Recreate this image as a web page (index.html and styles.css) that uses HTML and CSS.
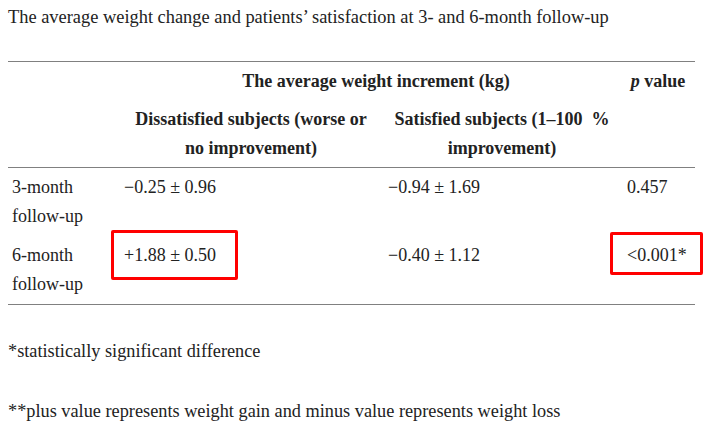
FILE: index.html
```html
<!DOCTYPE html>
<html>
<head>
<meta charset="utf-8">
<link rel="stylesheet" href="styles.css">
</head>
<body>
<div class="caption">The average weight change and patients’ satisfaction at 3- and 6-month follow-up</div>
<table class="tbl">
  <colgroup>
    <col class="c1"><col class="c2"><col class="c3"><col class="c4">
  </colgroup>
  <thead>
    <tr class="h1">
      <th></th>
      <th colspan="2" class="span">The average weight increment (kg)</th>
      <th class="pv"><i>p</i> value</th>
    </tr>
    <tr class="h2">
      <th></th>
      <th class="sub2">Dissatisfied subjects (worse or<br>no improvement)</th>
      <th class="sub3">Satisfied subjects (1–100 &nbsp;%<br>improvement)</th>
      <th></th>
    </tr>
  </thead>
  <tbody>
    <tr>
      <td>3-month follow-up</td>
      <td class="v2">−0.25 ± 0.96</td>
      <td class="v3">−0.94 ± 1.69</td>
      <td class="v4">0.457</td>
    </tr>
    <tr>
      <td>6-month follow-up</td>
      <td class="v2 mark"><span class="box box1"></span>+1.88 ± 0.50</td>
      <td class="v3">−0.40 ± 1.12</td>
      <td class="v4 mark"><span class="box box2"></span>&lt;0.001*</td>
    </tr>
  </tbody>
</table>
<p class="note first">*statistically significant difference</p>
<p class="note">**plus value represents weight gain and minus value represents weight loss</p>
</body>
</html>
```
FILE: styles.css
```css
html, body { margin: 0; padding: 0; background: #fff; }
body { padding: 0 8px; color: #222; }
.caption {
  font-family: "Liberation Serif", serif;
  font-size: 18.4px;
  line-height: 22px;
  padding-top: 6px;
  height: 55px;
  color: #222;
}
.tbl {
  width: 687px;
  table-layout: fixed;
  border-collapse: collapse;
  border-top: 1px solid #808080;
  border-bottom: 1px solid #808080;
  font-family: "Liberation Serif", serif;
  font-size: 18px;
  line-height: 29px;
  color: #222;
}
.c1 { width: 104px; }
.c2 { width: 264px; }
.c3 { width: 239px; }
.c4 { width: 80px; }
.tbl th, .tbl td { padding: 5px 0; vertical-align: top; text-align: left; }
.tbl th { font-weight: bold; text-align: center; }
.h1 th { padding: 5px 0 5px; }
.h1 .span { padding-left: 25px; }
.h1 .pv { padding-left: 6px; }
.h2 th { padding: 4px 0; }
.h2 { border-bottom: 1px solid #808080; }
.sub2 { padding-left: 14px !important; }
.sub3 { padding-left: 13px !important; }
.tbl td:first-child { padding-left: 4px; padding-right: 10px; }
.tbl td.v2, .tbl td.v3, .tbl td.v4 { padding-left: 12px; }
.mark { position: relative; }
.box {
  position: absolute;
  border: 3px solid #ff0000;
  border-radius: 2px;
  box-sizing: border-box;
}
.box1 { left: -1px; top: -6px; width: 127px; height: 50px; }
.box2 { left: -5px; top: -4px; width: 93px; height: 43px; }
.note {
  font-family: "Liberation Serif", serif;
  font-size: 18.3px;
  line-height: 22px;
  margin: 0;
}
.note.first { margin-top: 35px; }
.note + .note { margin-top: 38px; }
```
